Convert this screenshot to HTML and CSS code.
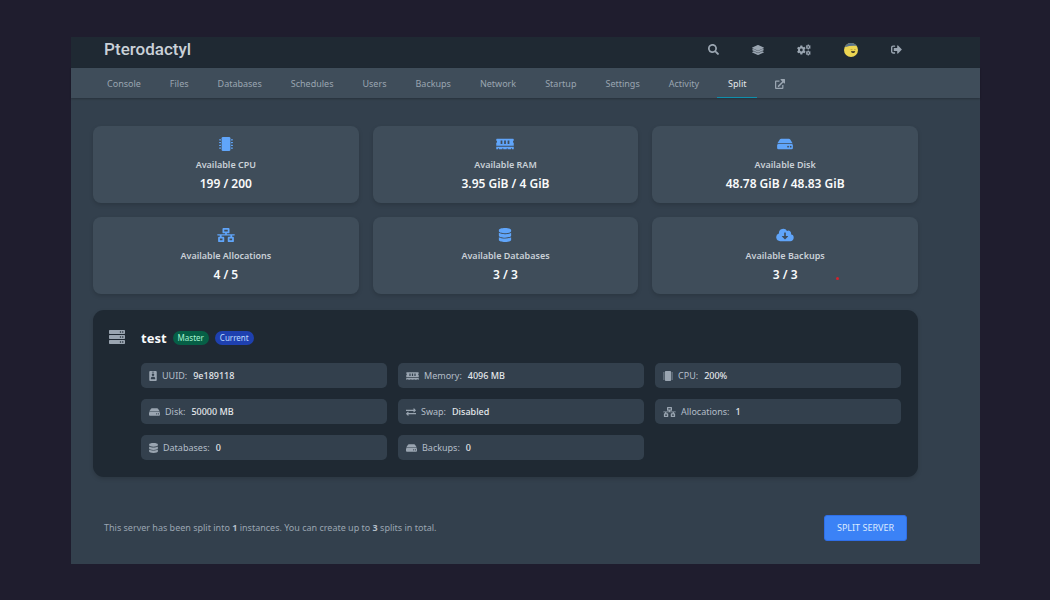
FILE: index.html
```html
<!DOCTYPE html>
<html lang="en">
<head>
    <meta charset="UTF-8">
    <meta name="viewport" content="width=device-width, initial-scale=1.0">
    <title>Pterodactyl - Split</title>
    <link rel="stylesheet" href="styles.css">
</head>
<body>
    <!-- Icon sprites -->
    <svg class="sprites" aria-hidden="true">
        <symbol id="i-cpu" viewBox="0 0 512 512">
            <path d="M144 0h224a48 48 0 0 1 48 48v416a48 48 0 0 1-48 48H144a48 48 0 0 1-48-48V48a48 48 0 0 1 48-48z"/>
            <path d="M72 80v48H18v-12H0V92h18V80zM72 182v48H18v-12H0v-24h18v-12zM72 282v48H18v-12H0v-24h18v-12zM72 384v48H18v-12H0v-24h18v-12zM440 80v48h54v-12h18V92h-18V80zM440 182v48h54v-12h18v-24h-18v-12zM440 282v48h54v-12h18v-24h-18v-12zM440 384v48h54v-12h18v-24h-18v-12z"/>
        </symbol>
        <symbol id="i-ram" viewBox="0 0 640 512">
            <path fill-rule="evenodd" d="M24 64h592q24 0 24 24v43a50 50 0 0 0 0 90v99H0v-99a50 50 0 0 0 0-90V88q0-24 24-24zM160 128v128h64V128zM288 128v128h64V128zM416 128v128h64V128z"/>
            <path d="M0 352h640v96H576v-40h-32v40H416v-40h-32v40H256v-40h-32v40H96v-40H64v40H0z"/>
        </symbol>
        <symbol id="i-disk" viewBox="0 0 576 512">
            <path d="M144 64h288q26 0 40 21l94 143q-18-4-38-4H48q-20 0-38 4l94-143q14-21 40-21z"/>
            <path fill-rule="evenodd" d="M48 256h480a48 48 0 0 1 48 48v96a48 48 0 0 1-48 48H48a48 48 0 0 1-48-48v-96a48 48 0 0 1 48-48zM400 320a32 32 0 1 0 0 64a32 32 0 0 0 0-64zM496 320a32 32 0 1 0 0 64a32 32 0 0 0 0-64z"/>
        </symbol>
        <symbol id="i-network" viewBox="0 0 640 512">
            <path fill-rule="evenodd" d="M224 0h192q32 0 32 32v128q0 32-32 32h-64v32h272q16 0 16 16v16q0 16-16 16H544v48h32q32 0 32 32v128q0 32-32 32H416q-32 0-32-32V352q0-32 32-32h64v-48H160v48h64q32 0 32 32v128q0 32-32 32H64q-32 0-32-32V352q0-32 32-32h32v-48H16q-16 0-16-16v-16q0-16 16-16h272v-32h-64q-32 0-32-32V32q0-32 32-32zM256 64v64h128V64zM96 384v64h96v-64zM448 384v64h96v-64z"/>
        </symbol>
        <symbol id="i-database" viewBox="0 0 448 512">
            <path d="M448 73v46c0 40-100 73-224 73S0 159 0 119V73C0 33 100 0 224 0s224 33 224 73zM448 176v103c0 40-100 73-224 73S0 319 0 279V176c48 33 136 48 224 48s176-15 224-48zM448 336v103c0 40-100 73-224 73S0 479 0 439V336c48 33 136 48 224 48s176-15 224-48z"/>
        </symbol>
        <symbol id="i-cloud" viewBox="0 0 640 512">
            <path fill-rule="evenodd" d="M537 227a96 96 0 0 0-142-114A160 160 0 0 0 96 200A144 144 0 0 0 144 480h368a128 128 0 0 0 25-253zM290 176q0-16 16-16h28q16 0 16 16v112h72q18 2 8 19L330 414q-10 10-20 0L210 307q-10-17 8-19h72z"/>
        </symbol>
        <symbol id="i-server" viewBox="0 0 512 448">
            <path fill-rule="evenodd" d="M24 0h464q24 0 24 24v80q0 24-24 24H24q-24 0-24-24V24Q0 0 24 0zM368 40a24 24 0 1 0 0 48a24 24 0 0 0 0-48zM440 40a24 24 0 1 0 0 48a24 24 0 0 0 0-48zM24 160h464q24 0 24 24v80q0 24-24 24H24q-24 0-24-24v-80q0-24 24-24zM368 200a24 24 0 1 0 0 48a24 24 0 0 0 0-48zM440 200a24 24 0 1 0 0 48a24 24 0 0 0 0-48zM24 320h464q24 0 24 24v80q0 24-24 24H24q-24 0-24-24v-80q0-24 24-24zM368 360a24 24 0 1 0 0 48a24 24 0 0 0 0-48zM440 360a24 24 0 1 0 0 48a24 24 0 0 0 0-48z"/>
        </symbol>
        <symbol id="i-id" viewBox="0 0 384 512">
            <path fill-rule="evenodd" d="M48 0h288a48 48 0 0 1 48 48v416a48 48 0 0 1-48 48H48a48 48 0 0 1-48-48V48A48 48 0 0 1 48 0zM136 32v40h112V32zM192 128a64 64 0 1 0 0 128a64 64 0 0 0 0-128zM80 400q0 16 16 16h192q16 0 16-16v-20q0-76-76-92h-72q-76 16-76 92z"/>
        </symbol>
        <symbol id="i-swap" viewBox="0 0 512 512">
            <path d="M0 144h384V80q4-26 28-12l94 92q10 10 0 22l-94 92q-24 12-28-14v-52H0zM512 368H128v64q-4 26-28 12L6 352q-10-10 0-22l94-92q24-12 28 14v52h384z"/>
        </symbol>
        <symbol id="i-search" viewBox="0 0 512 512">
            <path fill-rule="evenodd" d="M505 443L405 343q-7-7-17-7h-16A208 208 0 1 0 336 372v16q0 10 7 17l100 100q17 14 34 0l28-28q14-17 0-34zM208 80a128 128 0 1 1 0 256a128 128 0 0 1 0-256z"/>
        </symbol>
        <symbol id="i-layers" viewBox="0 0 512 512">
            <path d="M12 148l232-105q12-5 24 0l232 105q24 14 0 29L268 282q-12 5-24 0L12 177q-24-15 0-29zM500 236l-58-26-161 73q-25 11-50 0L70 210l-58 26q-24 14 0 29l232 105q12 5 24 0l232-105q24-15 0-29zM500 337l-58-26-161 73q-25 11-50 0L70 311l-58 26q-24 14 0 29l232 105q12 5 24 0l232-105q24-15 0-29z"/>
        </symbol>
        <symbol id="i-cogs" viewBox="0 0 640 512">
            <path fill-rule="evenodd" d="M154 50h88l12 56 38 22 54-18 44 76-42 38v64l42 38-44 76-54-18-38 22-12 56h-88l-12-56-38-22-54 18-44-76 42-38v-64L6 186l44-76 54 18 38-22zM198 192a64 64 0 1 0 0 128a64 64 0 0 0 0-128z"/>
            <path fill-rule="evenodd" d="M490 0h48l8 34 22 14 34-10 24 42-26 24v24l26 24-24 42-34-10-22 14-8 34h-48l-8-34-22-14-34 10-24-42 26-24v-24l-26-24 24-42 34 10 22-14zM514 80a36 36 0 1 0 0 72a36 36 0 0 0 0-72zM490 280h48l8 34 22 14 34-10 24 42-26 24v24l26 24-24 42-34-10-22 14-8 34h-48l-8-34-22-14-34 10-24-42 26-24v-24l-26-24 24-42 34 10 22-14zM514 360a36 36 0 1 0 0 72a36 36 0 0 0 0-72z"/>
        </symbol>
        <symbol id="i-logout" viewBox="0 0 512 512">
            <path d="M497 273L329 441q-33 26-41-17v-96H152q-24 0-24-24v-96q0-24 24-24h136V88q8-43 41-17l168 168q14 17 0 34zM192 436v-40q0-12-12-12H96q-32 0-32-32V160q0-32 32-32h84q12 0 12-12V76q0-12-12-12H96Q0 64 0 160v192q0 96 96 96h84q12 0 12-12z"/>
        </symbol>
        <symbol id="i-external" viewBox="0 0 512 512">
            <path d="M304 0h184q24 0 24 24v184q-8 36-41 17l-47-47-226 226q-17 14-34 0l-20-20q-14-17 0-34L370 124l-83-83q-19-33 17-41zM432 304v160q0 48-48 48H48q-48 0-48-48V128q0-48 48-48h180v64H64v304h304V304z"/>
        </symbol>
        <symbol id="i-avatar" viewBox="0 0 14 14">
            <circle cx="7" cy="7" r="7" fill="#ecd552"/>
            <path d="M0.7 4.2C2 1.5 4.2 0 7 0c2.500 0 4.600 1 5.900 3C9 2.600 5 3 0.700 4.200z" fill="#57708c"/>
            <path d="M6.500 6.600h2M10 6.600h1.800" stroke="#a58b32" stroke-width="0.600"/>
            <path d="M7 8.300h4.200c0 2.200-4.200 2.200-4.200 0z" fill="#2b2722"/>
        </symbol>
    </svg>

    <div class="panel">
        <header class="header">
            <h1>Pterodactyl</h1>
            <nav class="header-links" aria-label="Account">
                <a href="#" aria-label="Search"><svg class="icon icon-sm"><use href="#i-search"/></svg></a>
                <a href="#" aria-label="Servers"><svg class="icon icon-md"><use href="#i-layers"/></svg></a>
                <a href="#" aria-label="Admin"><svg class="icon icon-lg"><use href="#i-cogs"/></svg></a>
                <a href="#" aria-label="Profile"><svg class="icon icon-lg"><use href="#i-avatar"/></svg></a>
                <a href="#" aria-label="Sign out"><svg class="icon icon-sm"><use href="#i-logout"/></svg></a>
            </nav>
        </header>

        <nav class="tabs" aria-label="Server">
            <a href="#">Console</a>
            <a href="#">Files</a>
            <a href="#">Databases</a>
            <a href="#">Schedules</a>
            <a href="#">Users</a>
            <a href="#">Backups</a>
            <a href="#">Network</a>
            <a href="#">Startup</a>
            <a href="#">Settings</a>
            <a href="#">Activity</a>
            <a href="#" class="active" aria-current="page">Split</a>
            <a href="#" aria-label="Open in admin"><svg class="icon icon-xs"><use href="#i-external"/></svg></a>
        </nav>

        <main class="content">
            <section class="stats">
                <div class="stat">
                    <svg class="stat-icon"><use href="#i-cpu"/></svg>
                    <h2>Available CPU</h2>
                    <p>199 / 200</p>
                </div>
                <div class="stat">
                    <svg class="stat-icon"><use href="#i-ram"/></svg>
                    <h2>Available RAM</h2>
                    <p>3.95 GiB / 4 GiB</p>
                </div>
                <div class="stat">
                    <svg class="stat-icon"><use href="#i-disk"/></svg>
                    <h2>Available Disk</h2>
                    <p>48.78 GiB / 48.83 GiB</p>
                </div>
                <div class="stat">
                    <svg class="stat-icon"><use href="#i-network"/></svg>
                    <h2>Available Allocations</h2>
                    <p>4 / 5</p>
                </div>
                <div class="stat">
                    <svg class="stat-icon"><use href="#i-database"/></svg>
                    <h2>Available Databases</h2>
                    <p>3 / 3</p>
                </div>
                <div class="stat">
                    <svg class="stat-icon"><use href="#i-cloud"/></svg>
                    <h2>Available Backups</h2>
                    <p>3 / 3</p>
                    <span class="marker"></span>
                </div>
            </section>

            <section class="server">
                <svg class="server-icon"><use href="#i-server"/></svg>
                <div class="server-body">
                    <div class="server-title">
                        <h2>test</h2>
                        <span class="badge badge-master">Master</span>
                        <span class="badge badge-current">Current</span>
                    </div>
                    <div class="details">
                        <div class="detail"><svg class="w-id"><use href="#i-id"/></svg><span>UUID:</span><b>9e189118</b></div>
                        <div class="detail"><svg class="w-wide"><use href="#i-ram"/></svg><span>Memory:</span><b>4096 MB</b></div>
                        <div class="detail"><svg class="w-square"><use href="#i-cpu"/></svg><span>CPU:</span><b>200%</b></div>
                        <div class="detail"><svg class="w-disk"><use href="#i-disk"/></svg><span>Disk:</span><b>50000 MB</b></div>
                        <div class="detail"><svg class="w-square"><use href="#i-swap"/></svg><span>Swap:</span><b>Disabled</b></div>
                        <div class="detail"><svg class="w-wide"><use href="#i-network"/></svg><span>Allocations:</span><b>1</b></div>
                        <div class="detail"><svg class="w-db"><use href="#i-database"/></svg><span>Databases:</span><b>0</b></div>
                        <div class="detail"><svg class="w-disk"><use href="#i-disk"/></svg><span>Backups:</span><b>0</b></div>
                    </div>
                </div>
            </section>

            <footer class="footer">
                <p>This server has been split into <b>1</b> instances. You can create up to <b>3</b> splits in total.</p>
                <button type="button" class="split-button">SPLIT SERVER</button>
            </footer>
        </main>
    </div>
</body>
</html>
```

FILE: styles.css
```css
* {
    box-sizing: border-box;
}

body {
    margin: 0;
    padding: 37px 70px 36px 71px;
    background: #1f1d2e;
    color: #cad1d8;
    font-family: "Noto Sans", "Open Sans", sans-serif;
    font-size: 9px;
    line-height: 14px;
}

h1, h2, p {
    margin: 0;
}

a {
    color: inherit;
    text-decoration: none;
}

svg {
    display: block;
    fill: currentColor;
}

.sprites {
    display: none;
}

.panel {
    background: #33404d;
}

/* Top bar */
.header {
    display: flex;
    justify-content: space-between;
    align-items: center;
    padding: 0 62px 6px 33px;
    background: #1f2933;
}

.header h1 {
    font-family: Roboto, sans-serif;
    font-size: 17px;
    font-weight: 500;
    line-height: 25px;
    color: #cad1d8;
}

.header-links {
    display: flex;
    align-items: center;
    gap: 1px;
    color: #9aa5b1;
}

.header-links a {
    padding: 0 16px;
}

.icon-xs {
    width: 10px;
    height: 10px;
}

.icon-sm {
    width: 11px;
    height: 11px;
}

.icon-md {
    width: 12px;
    height: 12px;
}

.icon-lg {
    width: 14px;
    height: 14px;
}

/* Server tabs */
.tabs {
    display: flex;
    gap: 7px;
    padding: 0 25px;
    background: #3f4d5a;
    color: #9aa5b1;
    box-shadow: 0 1px 2px rgba(0, 0, 0, 0.25);
}

.tabs a {
    display: flex;
    align-items: center;
    height: 30px;
    padding: 2px 11px 0;
    border-bottom: 1px solid transparent;
}

.tabs .active {
    color: #e4e7eb;
    border-bottom-color: #0e8fad;
}

.content {
    padding: 28px 62px 23px 22px;
}

/* Available resources */
.stats {
    display: grid;
    grid-template-columns: repeat(3, 1fr);
    gap: 14px;
}

.stat {
    position: relative;
    display: flex;
    flex-direction: column;
    align-items: center;
    padding: 11px 11px 10px;
    background: #3f4d5a;
    border-radius: 8px;
    box-shadow: 0 2px 4px rgba(0, 0, 0, 0.15);
}

.stat-icon {
    width: 18px;
    height: 14px;
    color: #60a5fa;
}

.stat h2 {
    margin-top: 7px;
    font-size: 9px;
    font-weight: 600;
}

.stat p {
    margin-top: 3px;
    color: #f9fafb;
    font-size: 12px;
    font-weight: 600;
    line-height: 18px;
}

.marker {
    position: absolute;
    right: 79px;
    bottom: 14px;
    width: 3px;
    height: 3px;
    border-radius: 50%;
    background: #d3222c;
}

/* Server card */
.server {
    display: flex;
    gap: 16px;
    margin-top: 16px;
    padding: 17px 17px 17px 16px;
    background: #1f2933;
    border-radius: 11px;
    box-shadow: 0 2px 4px rgba(0, 0, 0, 0.15);
}

.server-icon {
    width: 16px;
    height: 14px;
    margin-top: 3px;
    color: #9aa5b1;
}

.server-body {
    flex: 1;
}

.server-title {
    display: flex;
    align-items: center;
    gap: 6px;
    padding-top: 1px;
    margin-bottom: 15px;
}

.server-title h2 {
    color: #f9fafb;
    font-size: 13px;
    font-weight: 700;
    line-height: 20px;
}

.badge {
    padding: 0 5px;
    border-radius: 7px;
    font-size: 8px;
}

.badge-master {
    background: #065f46;
    color: #a7f3d0;
}

.badge-current {
    background: #1e40af;
    color: #bfdbfe;
}

.details {
    display: grid;
    grid-template-columns: repeat(3, 1fr);
    gap: 11px;
}

.detail {
    display: flex;
    align-items: center;
    height: 25px;
    padding: 0 8px;
    background: #33404d;
    border-radius: 5px;
}

.detail svg {
    height: 10px;
    color: #9aa5b1;
}

.detail span {
    margin: 0 6px 0 5px;
    color: #b4bec8;
}

.detail b {
    color: #e4e7eb;
    font-weight: 500;
}

.w-id {
    width: 8px;
}

.w-db {
    width: 9px;
}

.w-square {
    width: 10px;
}

.w-disk {
    width: 11px;
}

.w-wide {
    width: 13px;
}

/* Footer */
.footer {
    display: flex;
    justify-content: space-between;
    align-items: center;
    margin-top: 38px;
    padding: 0 11px;
    color: #9aa5b1;
}

.footer b {
    color: #b4bec8;
}

.split-button {
    padding: 5px 12px;
    border: 1px solid #2f6fe8;
    border-radius: 3px;
    background: #3b82f6;
    color: #dbeafe;
    font-family: inherit;
    font-size: 9px;
    line-height: 14px;
    cursor: pointer;
}
```
